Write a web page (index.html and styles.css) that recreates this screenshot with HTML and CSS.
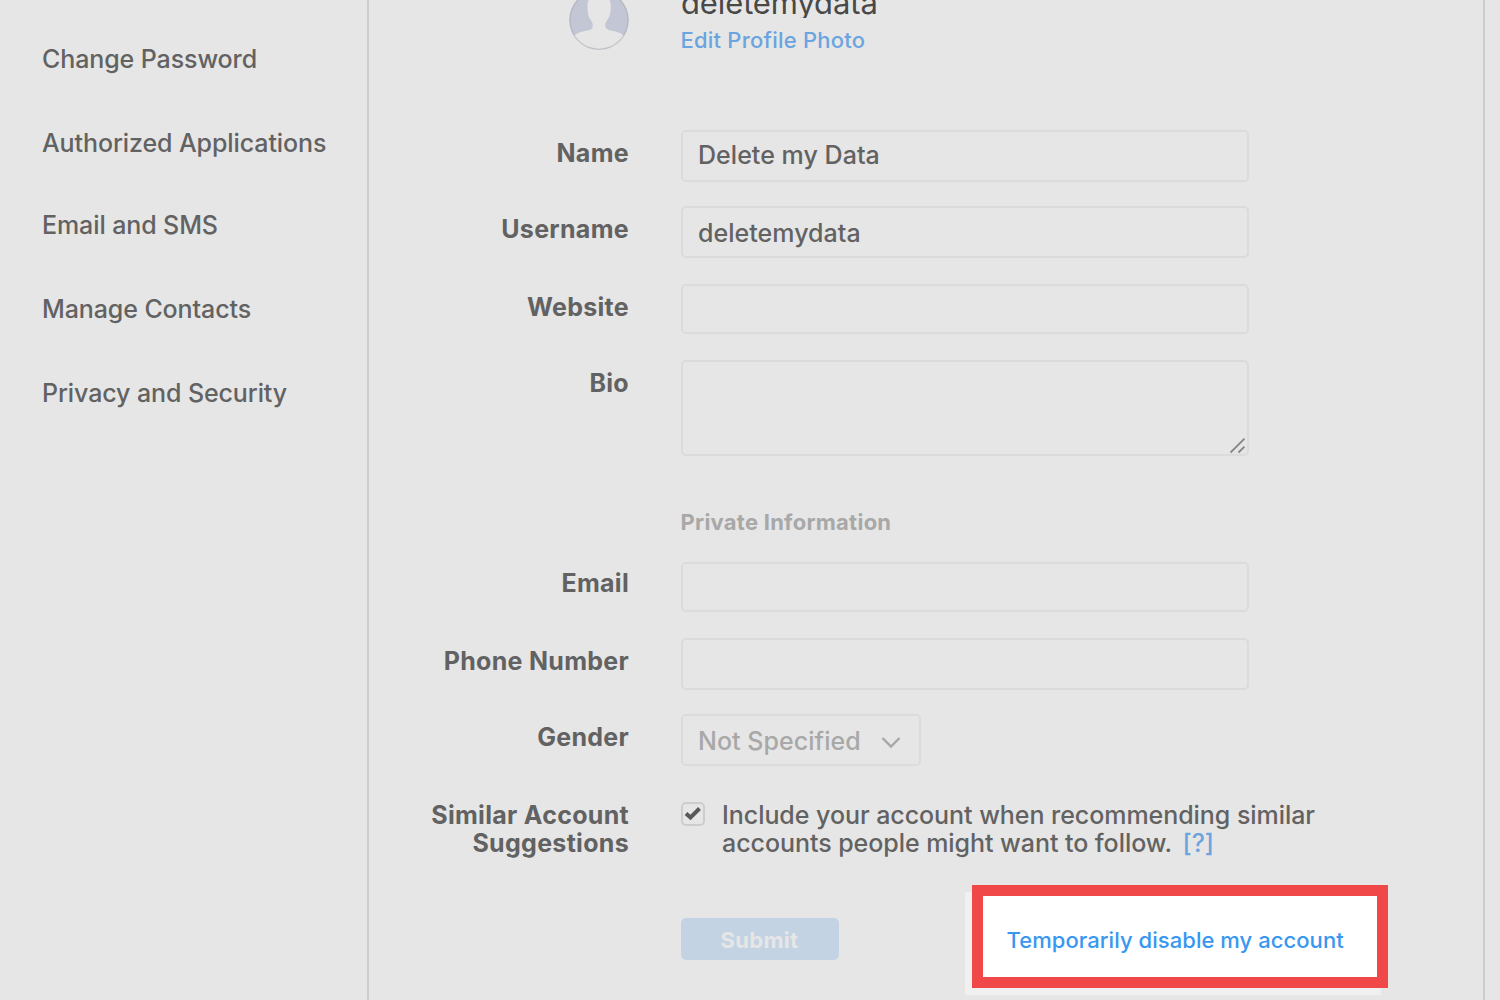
FILE: index.html
```html
<!DOCTYPE html>
<html lang="en">
<head>
<meta charset="utf-8">
<title>Edit Profile</title>
<link rel="stylesheet" href="styles.css">
</head>
<body>
<div class="page">
  <nav class="sidebar">
    <a>Change Password</a>
    <a class="tight">Authorized Applications</a>
    <a>Email and SMS</a>
    <a>Manage Contacts</a>
    <a>Privacy and Security</a>
  </nav>
  <main class="content">
    <header class="profile">
      <svg class="avatar" width="60" height="60" viewBox="0 0 60 60">
        <circle cx="30" cy="30" r="29.500" fill="#c3c6d4"/>
        <path d="M30 3C22 3 18.500 9 18.500 16c0 8 1 11 3.500 14.500 2.500 3.500 2 7 .5 8.500-3 2-12 2-17.300 6.500a29.500 29.500 0 0 0 49.600 0C49.500 41 40.500 41 37.800 39c-1.800-1.500-2.300-5 .2-8.500C40.500 27 41.800 24 41.800 16 41.800 9 38 3 30 3z" fill="#e6e6e6"/>
        <circle cx="30" cy="30" r="29.200" fill="none" stroke="#000" stroke-opacity=".09" stroke-width="1.600"/>
      </svg>
      <div class="identity">
        <div class="handle">deletemydata</div>
        <a class="photo-link">Edit Profile Photo</a>
      </div>
    </header>
    <div class="row name"><label>Name</label><div class="input">Delete my Data</div></div>
    <div class="row username"><label>Username</label><div class="input">deletemydata</div></div>
    <div class="row website"><label>Website</label><div class="input"></div></div>
    <div class="row bio"><label>Bio</label><div class="input area">
      <svg width="16" height="16" viewBox="0 0 16 16" fill="none" stroke="#858585" stroke-width="1.800"><path d="M.5 14.500 14.500 .7M8.500 14.500 14.500 8.700"/></svg>
    </div></div>
    <div class="row section"><span></span><h2>Private Information</h2></div>
    <div class="row email"><label>Email</label><div class="input"></div></div>
    <div class="row phone"><label>Phone Number</label><div class="input"></div></div>
    <div class="row gender"><label>Gender</label><div class="input select"><span>Not Specified</span>
      <svg width="20" height="13" viewBox="0 0 20 13" fill="none" stroke="#a8a8a8" stroke-width="2.400"><path d="M1.500 2 10 10.500 18.500 2"/></svg>
    </div></div>
    <div class="row similar"><label>Similar Account<br>Suggestions</label>
      <div class="option">
        <span class="check"><svg width="18" height="16" viewBox="0 0 18 16" fill="none" stroke="#585858" stroke-width="4"><path d="M2 7.500 6.500 11.500 15.500 2.500"/></svg></span>
        <p>Include your account when recommending similar<br>accounts people might want to follow. <a class="help">[?]</a></p>
      </div>
    </div>
    <div class="row actions"><span></span>
      <div class="buttons">
        <div class="submit">Submit</div>
        <div class="highlight"><a>Temporarily disable my account</a></div>
      </div>
    </div>
  </main>
</div>
</body>
</html>
```
FILE: styles.css
```css
* { box-sizing: border-box; }
body {
  margin: 0;
  background: #e6e6e6;
  color: #626262;
  font: 450 25px/28px Inter, "Liberation Sans", sans-serif;
  letter-spacing: .04px;
  overflow: hidden;
}
.page { display: flex; height: 1000px; overflow: hidden; }
.sidebar {
  flex: 0 0 369px;
  padding: 17px 0 0 42px;
  border-right: 2px solid #cdcdcd;
  letter-spacing: -.1px;
  white-space: nowrap;
}
.sidebar a { display: block; height: 84px; line-height: 84px; }
.sidebar .tight { height: 82px; }
.content { flex: 0 0 1116px; height: 1000px; border-right: 2px solid #cdcdcd; }
.profile { display: flex; height: 130px; padding-left: 200px; }
.avatar { flex: none; margin-top: -10.500px; }
.identity { margin-left: 52px; }
.handle {
  height: 18px;
  overflow: hidden;
  color: #484848;
  font-size: 31px;
  font-weight: 400;
  letter-spacing: -.12px;
  line-height: 6px;
}
.photo-link { display: block; margin: 8px 0 0 -.5px; color: #6ba4de; font-size: 22px; letter-spacing: .22px; }
.row { display: grid; grid-template-columns: 260px 1fr; column-gap: 52px; height: 76px; align-items: start; }
label { text-align: right; font-weight: 650; letter-spacing: .3px; padding-top: 9px; white-space: nowrap; }
.input {
  width: 568px;
  height: 52px;
  border: 2px solid #dbdbdb;
  border-radius: 5px;
  padding-left: 15px;
  line-height: 46px;
}
.username { height: 78px; }
.username .input { line-height: 50px; }
.website .input, .email .input { height: 50px; }
.bio { height: 142px; }
.area { height: 96px; display: flex; justify-content: flex-end; align-items: flex-end; padding: 0 1px 0 0; }
.section { height: 60px; }
h2 { margin: 6px 0 0 -.5px; font-size: 22px; line-height: 28px; font-weight: 650; letter-spacing: .25px; color: #a8a8a8; }
.email label { padding-top: 7px; }
.gender { height: 88px; }
.select { display: flex; align-items: center; width: 240px; color: #a8a8a8; }
.select span { padding-top: 2px; }
.select svg { margin: 4px 0 0 20px; }
.similar { height: 116px; }
.similar label { padding-top: 0; margin-top: -1px; }
.option { display: flex; }
.check { flex: none; width: 24px; height: 24px; border: 2px solid #cdcdcd; border-radius: 5px; display: flex; align-items: center; justify-content: center; }
p { margin: -1px 0 0 17px; letter-spacing: -.05px; white-space: nowrap; }
.help { color: #6ba4de; margin-left: 4px; }
.buttons { display: flex; align-items: flex-start; }
.submit { width: 158px; height: 42px; border-radius: 5px; background: #c3d3e3; color: #e6e6e6; font-size: 22px; font-weight: 700; letter-spacing: .3px; line-height: 44px; padding-right: 1px; text-align: center; }
.highlight {
  width: 416px;
  height: 103px;
  margin: -33px 0 0 133px;
  border: 11px solid #f04848;
  background: #fff;
  box-shadow: -7px 7px 0 #f0f0f0;
  color: #3897f0;
  font-size: 22px;
  letter-spacing: .05px;
  line-height: 88px;
  padding-left: 23.500px;
  white-space: nowrap;
}
```
